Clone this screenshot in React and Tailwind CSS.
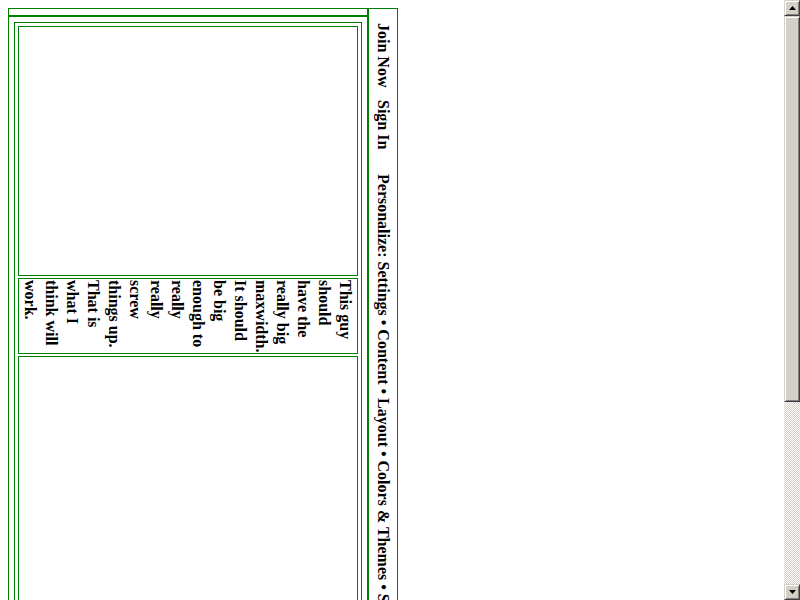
export default function App() {
  const vert = "[writing-mode:vertical-rl]";
  return (
    <div className="w-[800px] h-[600px] overflow-hidden bg-white flex font-['Liberation_Serif',serif] text-black">
      <div className="w-[784px] h-[600px] overflow-hidden pt-[8px] pl-[8px]">
        <div className="w-[390px] h-[760px] border border-b-0 border-[#008000] flex">
          <div className="w-[358px] flex flex-col">
            <div className="h-[8px] shrink-0 border-b-2 border-[#008000]" />
            <div className="p-[5px] shrink-0">
              <div className="border border-[#008000] p-[3px] flex flex-col gap-[2px]">
                <div className="h-[250px] shrink-0 border border-[#008000]" />
                <div className="h-[76px] shrink-0 border border-[#008000] p-[1px] flex">
                  <div className={`flex-1 ${vert} text-[16px] font-bold leading-[21px]`}>
                    This guy should have the really big maxwidth. It should be big enough to really really screw things up. That is what I think will work.
                  </div>
                </div>
                <div className="h-[360px] shrink-0 border border-[#008000]" />
              </div>
            </div>
          </div>
          <div className="w-[2px] bg-[#008000]" />
          <div className={`w-[28px] ${vert} whitespace-nowrap text-[16px] font-bold pt-[14px] flex items-center`}>
            <span>Join Now</span>
            <span className="ms-[13px]">Sign In</span>
            <span className="ms-[24px]">Personalize: Settings • Content • Layout • Colors &amp; Themes • Stocks</span>
          </div>
        </div>
      </div>
      <div className="w-[16px] h-[600px] flex flex-col">
        <div className="h-[16px] shrink-0 bg-[#d4d0c8] border border-t-[#d4d0c8] border-l-[#d4d0c8] border-r-[#404040] border-b-[#404040] shadow-[inset_1px_1px_#ffffff,inset_-1px_-1px_#808080] flex items-center justify-center">
          <svg width="7" height="4" viewBox="0 0 7 4"><polygon points="3.5,0 7,4 0,4" fill="#000" /></svg>
        </div>
        <div className="h-[386px] shrink-0 bg-[#d4d0c8] border border-t-[#d4d0c8] border-l-[#d4d0c8] border-r-[#404040] border-b-[#404040] shadow-[inset_1px_1px_#ffffff,inset_-1px_-1px_#808080]" />
        <div className="flex-1 bg-[repeating-conic-gradient(#d4d0c8_0%_25%,#ffffff_0%_50%)] bg-[length:2px_2px]" />
        <div className="h-[16px] shrink-0 bg-[#d4d0c8] border border-t-[#d4d0c8] border-l-[#d4d0c8] border-r-[#404040] border-b-[#404040] shadow-[inset_1px_1px_#ffffff,inset_-1px_-1px_#808080] flex items-center justify-center">
          <svg width="7" height="4" viewBox="0 0 7 4"><polygon points="0,0 7,0 3.5,4" fill="#000" /></svg>
        </div>
      </div>
    </div>
  );
}
